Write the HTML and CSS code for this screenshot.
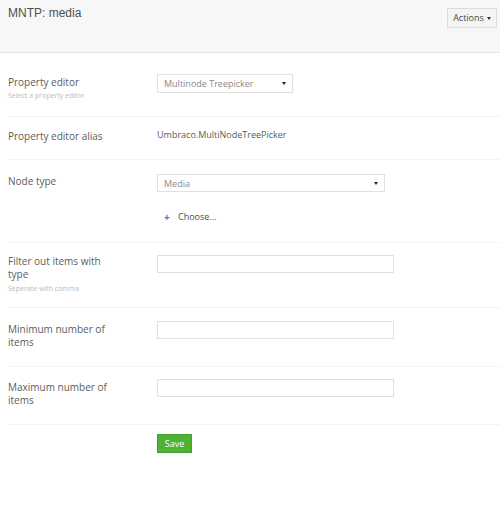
FILE: index.html
```html
<!DOCTYPE html>
<html>
<head>
<meta charset="utf-8">
<link rel="stylesheet" href="styles.css">
</head>
<body>
<div class="header">
  <div class="title">MNTP: media</div>
  <div class="actions">Actions <span class="caret"></span></div>
</div>
<div class="form">
  <div class="row r1">
    <div class="label-col">
      <div class="label">Property editor</div>
      <div class="desc">Select a property editor</div>
    </div>
    <div class="controls">
      <div class="select sel1"><span>Multinode Treepicker</span><span class="arrow"></span></div>
    </div>
  </div>
  <div class="row r2">
    <div class="label-col">
      <div class="label">Property editor alias</div>
    </div>
    <div class="controls">
      <div class="value">Umbraco.MultiNodeTreePicker</div>
    </div>
  </div>
  <div class="row r3">
    <div class="label-col">
      <div class="label">Node type</div>
    </div>
    <div class="controls">
      <div class="select sel2"><span>Media</span><span class="arrow"></span></div>
      <div class="choose"><span class="plus">+</span>Choose...</div>
    </div>
  </div>
  <div class="row r4">
    <div class="label-col">
      <div class="label">Filter out items with type</div>
      <div class="desc">Seperate with comma</div>
    </div>
    <div class="controls">
      <div class="input"></div>
    </div>
  </div>
  <div class="row r5">
    <div class="label-col">
      <div class="label">Minimum number of items</div>
    </div>
    <div class="controls">
      <div class="input"></div>
    </div>
  </div>
  <div class="row r6">
    <div class="label-col">
      <div class="label">Maximum number of items</div>
    </div>
    <div class="controls">
      <div class="input"></div>
    </div>
  </div>
  <div class="save-wrap">
    <div class="save">Save</div>
  </div>
</div>
</body>
</html>
```

FILE: styles.css
```css
html, body {
  margin: 0;
  padding: 0;
  background: #fff;
}
body {
  font-family: "Open Sans", "DejaVu Sans", sans-serif;
  color: #5a5a5a;
  width: 500px;
  height: 513px;
  overflow: hidden;
}
.header {
  height: 52px;
  background: #f7f7f7;
  border-bottom: 1px solid #e3e3e3;
  display: flex;
  justify-content: space-between;
  align-items: flex-start;
}
.title {
  font-family: "Liberation Sans", Arial, sans-serif;
  font-size: 12px;
  line-height: 14px;
  color: #505050;
  padding: 6px 0 0 8px;
}
.actions {
  margin: 8px 3px 0 0;
  height: 18px;
  width: 48px;
  box-sizing: content-box;
  border: 1px solid #dcdcdc;
  background: #f4f4f4;
  font-size: 9px;
  line-height: 18px;
  color: #4a4a4a;
  display: flex;
  align-items: center;
  justify-content: center;
  gap: 3px;
}
.caret {
  width: 0;
  height: 0;
  border-left: 2.5px solid transparent;
  border-right: 2.5px solid transparent;
  border-top: 3px solid #333;
}
.form {
  padding-left: 8px;
}
.row {
  display: flex;
  border-bottom: 1px solid #f4f4f4;
}
.label-col {
  width: 149px;
  flex: none;
}
.label {
  font-size: 10px;
  line-height: 13px;
  width: 100px;
  color: #5c5c5c;
}
.desc {
  font-size: 7px;
  line-height: 10px;
  color: #bbb;
  margin-top: 3px;
}
.controls {
  flex: 1;
}
.select {
  box-sizing: border-box;
  border: 1px solid #e0e0e0;
  background: #fff;
  font-size: 9px;
  color: #8a8a8a;
  display: flex;
  align-items: center;
  justify-content: space-between;
  padding: 0 6px 0 6px;
}
.arrow {
  width: 0;
  height: 0;
  border-left: 2px solid transparent;
  border-right: 2px solid transparent;
  border-top: 3px solid #222;
}
.sel1 {
  width: 136px;
  height: 19px;
}
.sel2 {
  width: 228px;
  height: 18px;
}
.value {
  font-size: 9px;
  line-height: 14px;
  color: #5a5a5a;
}
.choose {
  font-size: 9px;
  line-height: 14px;
  color: #4a4a4a;
  margin-top: 18px;
  padding-left: 7px;
  display: flex;
  align-items: center;
}
.plus {
  color: #2d86e0;
  font-weight: bold;
  font-size: 10px;
  width: 14px;
}
.input {
  box-sizing: border-box;
  width: 237px;
  height: 18px;
  border: 1px solid #e0e0e0;
  background: #fff;
}
.r1 { padding: 21px 0 15px; }
.r1 .label { padding-top: 2px; }
.r1 .desc { margin-top: 2px; }
.r2 { padding: 11px 0 16px; }
.r2 .label { padding-top: 2px; }
.r3 { padding: 14px 0 18px; }
.r3 .label { padding-top: 1px; }
.r4 { padding: 12px 0 13px; }
.r5 { padding: 13px 0 17px; }
.r5 .label { padding-top: 2px; }
.r6 { padding: 12px 0 17px; }
.r6 .label { padding-top: 2px; }
.save-wrap {
  padding: 9px 0 0 149px;
}
.save {
  width: 35px;
  height: 19px;
  box-sizing: border-box;
  background: #4fb235;
  border: 1px solid #43a22c;
  color: #fff;
  font-size: 9px;
  line-height: 17px;
  text-align: center;
}
```
